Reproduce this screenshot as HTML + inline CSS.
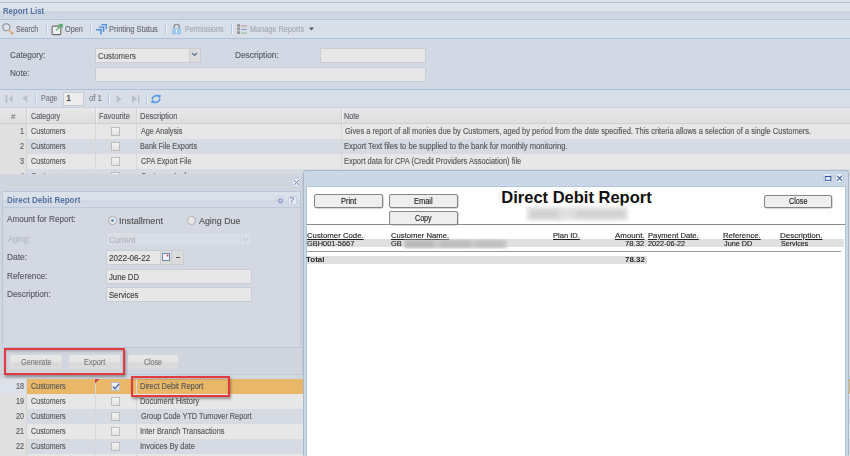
<!DOCTYPE html>
<html><head><meta charset="utf-8">
<style>
*{margin:0;padding:0;box-sizing:border-box}
html,body{width:850px;height:456px;overflow:hidden}
body{position:relative;background:#d6dce6;font-family:"Liberation Sans",sans-serif;color:#444}
.a{position:absolute}
svg.a{overflow:visible}
.t{position:absolute;white-space:nowrap;line-height:1;transform-origin:0 0;-webkit-text-stroke:0.15px}
.k{-webkit-text-stroke:0.12px}
</style></head><body>
<div class="a" style="left:0px;top:0px;width:850px;height:2px;background:#dde2ea"></div>
<div class="a" style="left:0px;top:2px;width:850px;height:1px;background:#b1c3da"></div>
<div class="a" style="left:0px;top:3px;width:850px;height:16px;background:linear-gradient(#dee3eb 0,#dee3eb 47%,#cbd4e1 53%,#d0d8e4 100%)"></div>
<div class="t" style="left:2.79px;top:7px;font-size:8.5px;color:#54739f;font-weight:bold;-webkit-text-stroke:0;transform:scaleX(0.916);">Report List</div>
<div class="a" style="left:0px;top:19px;width:850px;height:1px;background:#b3c4da"></div>
<div class="a" style="left:0px;top:20px;width:850px;height:18px;background:#d9dfe8"></div>
<svg class="a" style="left:0px;top:19px" width="16" height="18" viewBox="0 0 16 18">
  <circle cx="6.36" cy="8.3" r="3.5" fill="#dfe2e8" stroke="#8b909a" stroke-width="1.1"/>
  <line x1="9.2" y1="11.3" x2="12.6" y2="14.6" stroke="#dfb67a" stroke-width="1.9" stroke-linecap="round"/>
  <line x1="12" y1="14" x2="12.8" y2="14.8" stroke="#9a7a50" stroke-width="1.6"/></svg>
<div class="t" style="left:16.48px;top:25px;font-size:8.5px;color:#6c6c76;transform:scaleX(0.824);">Search</div>
<div class="a" style="left:46px;top:23.5px;width:2px;height:10.5px;background:linear-gradient(90deg,#b3c8e2 50%,#eef1f5 50%)"></div>
<svg class="a" style="left:45px;top:19px" width="20" height="18" viewBox="0 0 20 18">
  <rect x="7.1" y="7.1" width="8.7" height="8.5" rx="1" fill="#efefef" stroke="#6a6a6a" stroke-width="1.1"/>
  <line x1="11.2" y1="11.2" x2="16.3" y2="6.1" stroke="#5cb270" stroke-width="1.4"/>
  <path d="M13.2 5 L17.8 4.8 L17.8 9.4Z" fill="#5cb270"/></svg>
<div class="t" style="left:65.47px;top:25px;font-size:8.5px;color:#6c6c76;transform:scaleX(0.857);">Open</div>
<div class="a" style="left:90px;top:23.5px;width:2px;height:10.5px;background:linear-gradient(90deg,#b3c8e2 50%,#eef1f5 50%)"></div>
<svg class="a" style="left:90px;top:19px" width="18" height="18" viewBox="0 0 18 18">
  <path d="M11.4 5.6 H16.3 V10.3" fill="none" stroke="#4f93e2" stroke-width="1.4"/>
  <path d="M9 8.1 H13.6 V12.7" fill="none" stroke="#4a8ede" stroke-width="1.4"/>
  <path d="M6.1 10.7 H11 V15.6" fill="none" stroke="#4a8ede" stroke-width="1.5"/></svg>
<div class="t" style="left:109.20px;top:25px;font-size:8.5px;color:#6c6c76;transform:scaleX(0.884);">Printing Status</div>
<div class="a" style="left:165px;top:23.5px;width:2px;height:10.5px;background:linear-gradient(90deg,#b3c8e2 50%,#eef1f5 50%)"></div>
<svg class="a" style="left:162px;top:19px" width="20" height="18" viewBox="0 0 20 18">
  <path d="M12 9.5 V8 A2.6 2.6 0 0 1 17.3 8 V9.5" fill="none" stroke="#8d8f94" stroke-width="1.4"/>
  <rect x="10.1" y="9.2" width="9" height="6.4" rx="0.8" fill="#9dc9ee"/>
  <path d="M14.6 10.6 a0.8 0.8 0 0 1 0.4 1.4 V14.1 H14.2 V12 a0.8 0.8 0 0 1 0.4 -1.4Z" fill="#f0f6fc"/></svg>
<div class="t" style="left:184.64px;top:25px;font-size:8.5px;color:#a5aab4;transform:scaleX(0.830);">Permissions</div>
<div class="a" style="left:231px;top:23.5px;width:2px;height:10.5px;background:linear-gradient(90deg,#b3c8e2 50%,#eef1f5 50%)"></div>
<svg class="a" style="left:228px;top:19px" width="20" height="18" viewBox="0 0 20 18">
  <rect x="9.6" y="5.6" width="1.9" height="1.8" fill="none" stroke="#8f8f8f" stroke-width="0.9"/>
  <rect x="9.6" y="9.1" width="1.9" height="1.8" fill="none" stroke="#8f8f8f" stroke-width="0.9"/>
  <rect x="9.6" y="12.7" width="1.9" height="1.8" fill="none" stroke="#8f8f8f" stroke-width="0.9"/>
  <rect x="12.9" y="6.2" width="6" height="1.3" fill="#c9a0a2"/>
  <rect x="12.9" y="9.8" width="6" height="1.3" fill="#9ea4d2"/>
  <rect x="12.9" y="13.4" width="6" height="1.3" fill="#9fcaa0"/></svg>
<div class="t" style="left:249.62px;top:25px;font-size:8.5px;color:#a5aab4;transform:scaleX(0.860);">Manage Reports</div>
<svg class="a" style="left:309px;top:27px" width="5" height="4" viewBox="0 0 5 4"><path d="M0 0.5 H5 L2.5 3.5Z" fill="#555"/></svg>
<div class="a" style="left:0px;top:38px;width:850px;height:1px;background:#adc1da"></div>
<div class="a" style="left:0px;top:39px;width:850px;height:50px;background:#d3d9e4"></div>
<div class="t" style="left:10.39px;top:51px;font-size:9px;color:#5a5a66;transform:scaleX(0.906);">Category:</div>
<div class="a" style="left:95px;top:48px;width:106px;height:15px;background:#e7e7e7;border:1px solid #c9ccd2"></div>
<div class="a" style="left:189px;top:49px;width:11px;height:13px;background:#dcdcdc;border-left:1px solid #cfcfcf"></div>
<svg class="a" style="left:191px;top:52px" width="7" height="5" viewBox="0 0 7 5"><path d="M1 1 L3.5 3.5 L6 1" fill="none" stroke="#5b6f92" stroke-width="1.2"/></svg>
<div class="t" style="left:98.11px;top:52px;font-size:8.5px;color:#555;transform:scaleX(0.926);">Customers</div>
<div class="t" style="left:235.04px;top:51px;font-size:9px;color:#5a5a66;transform:scaleX(0.921);">Description:</div>
<div class="a" style="left:320px;top:48px;width:106px;height:15px;background:#e7e7e7;border:1px solid #c9ccd2"></div>
<div class="t" style="left:10.15px;top:69px;font-size:9px;color:#5a5a66;transform:scaleX(0.903);">Note:</div>
<div class="a" style="left:95px;top:67px;width:331px;height:15px;background:#e7e7e7;border:1px solid #c9ccd2"></div>
<div class="a" style="left:0px;top:89px;width:850px;height:1px;background:#adc1da"></div>
<div class="a" style="left:0px;top:90px;width:850px;height:18px;background:#d8dee7"></div>
<svg class="a" style="left:5px;top:94px" width="9" height="10" viewBox="0 0 9 10"><rect x="0.4" y="0.6" width="2" height="8.5" fill="#bcc0c7"/><path d="M7.7 0.6 L3.7 4.8 L7.7 9Z" fill="#bcc0c7"/></svg>
<svg class="a" style="left:22px;top:94px" width="6" height="10" viewBox="0 0 6 10"><path d="M5.3 0.6 L0.3 4.6 L5.3 8.4Z" fill="#bcc0c7"/></svg>
<div class="a" style="left:35px;top:94px;width:2px;height:10px;background:linear-gradient(90deg,#b3c8e2 50%,#eef1f5 50%)"></div>
<div class="t" style="left:41.24px;top:94px;font-size:8.5px;color:#7a7a84;transform:scaleX(0.830);">Page</div>
<div class="a" style="left:63px;top:92px;width:21px;height:14px;background:#ececec;border:1px solid #c9ccd2"></div>
<div class="t" style="left:66.36px;top:94px;font-size:8.5px;color:#333;">1</div>
<div class="t" style="left:89.29px;top:94px;font-size:8.5px;color:#7a7a84;transform:scaleX(0.908);">of 1</div>
<div class="a" style="left:108px;top:94px;width:2px;height:10px;background:linear-gradient(90deg,#b3c8e2 50%,#eef1f5 50%)"></div>
<svg class="a" style="left:116px;top:94px" width="6" height="10" viewBox="0 0 6 10"><path d="M0.5 1 L5.5 5 L0.5 9Z" fill="#b9bec7"/></svg>
<svg class="a" style="left:131px;top:94px" width="9" height="10" viewBox="0 0 9 10"><path d="M1 1 L6 5 L1 9Z" fill="#b9bec7"/><rect x="6.9" y="1" width="1.6" height="8" fill="#b9bec7"/></svg>
<div class="a" style="left:146px;top:94px;width:2px;height:10px;background:linear-gradient(90deg,#b3c8e2 50%,#eef1f5 50%)"></div>
<svg class="a" style="left:150px;top:93px" width="12" height="12" viewBox="0 0 12 12">
 <path d="M2.2 6.2 C2.6 3.2 6 1.8 8.8 3.4" fill="none" stroke="#5b9de2" stroke-width="1.7"/>
 <path d="M7.6 1.4 L11.2 2.6 L9.4 6Z" fill="#5b9de2"/>
 <path d="M9.8 5.8 C9.4 8.8 6 10.2 3.2 8.6" fill="none" stroke="#5b9de2" stroke-width="1.7"/>
 <path d="M4.4 10.6 L0.8 9.4 L2.6 6Z" fill="#5b9de2"/></svg>
<div class="a" style="left:0px;top:107px;width:850px;height:1px;background:#c9d2de"></div>
<div class="a" style="left:0px;top:108px;width:850px;height:16px;background:linear-gradient(#e8e8e8,#dedede);border-bottom:1px solid #d0d0d0"></div>
<div class="a" style="left:26px;top:108px;width:2px;height:15px;background:linear-gradient(90deg,#d2d2d2 50%,#f0f0f0 50%)"></div>
<div class="a" style="left:95px;top:108px;width:2px;height:15px;background:linear-gradient(90deg,#d2d2d2 50%,#f0f0f0 50%)"></div>
<div class="a" style="left:136px;top:108px;width:2px;height:15px;background:linear-gradient(90deg,#d2d2d2 50%,#f0f0f0 50%)"></div>
<div class="a" style="left:341px;top:108px;width:2px;height:15px;background:linear-gradient(90deg,#d2d2d2 50%,#f0f0f0 50%)"></div>
<div class="t" style="left:11.36px;top:113px;font-size:8px;color:#888;transform:scaleX(0.986);">#</div>
<div class="t" style="left:31.34px;top:112px;font-size:8.5px;color:#5c5c66;transform:scaleX(0.845);">Category</div>
<div class="t" style="left:99.11px;top:112px;font-size:8.5px;color:#5c5c66;transform:scaleX(0.868);">Favourite</div>
<div class="t" style="left:140.40px;top:112px;font-size:8.5px;color:#5c5c66;transform:scaleX(0.877);">Description</div>
<div class="t" style="left:344.42px;top:112px;font-size:8.5px;color:#5c5c66;transform:scaleX(0.859);">Note</div>
<div class="a" style="left:0px;top:124px;width:850px;height:15px;background:#e7e7e7"></div>
<div class="a" style="left:0px;top:124px;width:27px;height:15px;background:#e0e0e0;border-right:1px solid #d4d4d4"></div>
<div class="a" style="left:95px;top:124px;width:1px;height:15px;background:#d8d8d8"></div>
<div class="a" style="left:136px;top:124px;width:1px;height:15px;background:#d8d8d8"></div>
<div class="a" style="left:341px;top:124px;width:1px;height:15px;background:#d8d8d8"></div>
<div class="t" style="left:19.93px;top:127px;font-size:8.5px;color:#606060;transform:scaleX(0.847);">1</div>
<div class="t" style="left:31.34px;top:127px;font-size:8.5px;color:#585858;transform:scaleX(0.842);">Customers</div>
<div class="a" style="left:111px;top:127px;width:9px;height:9px;background:linear-gradient(#f4f4f4,#e2e2e2);border:1px solid #bdbdbd"></div>
<div class="t" style="left:141.00px;top:127px;font-size:8.5px;color:#585858;transform:scaleX(0.848);">Age Analysis</div>
<div class="t" style="left:344.63px;top:127px;font-size:8.5px;color:#585858;transform:scaleX(0.882);">Gives a report of all monies due by Customers, aged by period from the date specified. This criteria allows a selection of a single Customers.</div>
<div class="a" style="left:0px;top:139px;width:850px;height:15px;background:#d5dae3"></div>
<div class="a" style="left:0px;top:139px;width:27px;height:15px;background:#e0e0e0;border-right:1px solid #d4d4d4"></div>
<div class="a" style="left:95px;top:139px;width:1px;height:15px;background:#d8d8d8"></div>
<div class="a" style="left:136px;top:139px;width:1px;height:15px;background:#d8d8d8"></div>
<div class="a" style="left:341px;top:139px;width:1px;height:15px;background:#d8d8d8"></div>
<div class="t" style="left:19.96px;top:142px;font-size:8.5px;color:#606060;transform:scaleX(0.847);">2</div>
<div class="t" style="left:31.34px;top:142px;font-size:8.5px;color:#585858;transform:scaleX(0.842);">Customers</div>
<div class="a" style="left:111px;top:142px;width:9px;height:9px;background:linear-gradient(#f4f4f4,#e2e2e2);border:1px solid #bdbdbd"></div>
<div class="t" style="left:140.42px;top:142px;font-size:8.5px;color:#585858;transform:scaleX(0.856);">Bank File Exports</div>
<div class="t" style="left:344.39px;top:142px;font-size:8.5px;color:#585858;transform:scaleX(0.900);">Export Text files to be supplied to the bank for monthly monitoring.</div>
<div class="a" style="left:0px;top:154px;width:850px;height:15px;background:#e7e7e7"></div>
<div class="a" style="left:0px;top:154px;width:27px;height:15px;background:#e0e0e0;border-right:1px solid #d4d4d4"></div>
<div class="a" style="left:95px;top:154px;width:1px;height:15px;background:#d8d8d8"></div>
<div class="a" style="left:136px;top:154px;width:1px;height:15px;background:#d8d8d8"></div>
<div class="a" style="left:341px;top:154px;width:1px;height:15px;background:#d8d8d8"></div>
<div class="t" style="left:19.89px;top:157px;font-size:8.5px;color:#606060;transform:scaleX(0.847);">3</div>
<div class="t" style="left:31.34px;top:157px;font-size:8.5px;color:#585858;transform:scaleX(0.842);">Customers</div>
<div class="a" style="left:111px;top:157px;width:9px;height:9px;background:linear-gradient(#f4f4f4,#e2e2e2);border:1px solid #bdbdbd"></div>
<div class="t" style="left:140.64px;top:157px;font-size:8.5px;color:#585858;transform:scaleX(0.850);">CPA Export File</div>
<div class="t" style="left:344.40px;top:157px;font-size:8.5px;color:#585858;transform:scaleX(0.877);">Export data for CPA (Credit Providers Association) file</div>
<div class="a" style="left:0px;top:169px;width:850px;height:15px;background:#d5dae3"></div>
<div class="a" style="left:0px;top:169px;width:27px;height:15px;background:#e0e0e0;border-right:1px solid #d4d4d4"></div>
<div class="a" style="left:95px;top:169px;width:1px;height:15px;background:#d8d8d8"></div>
<div class="a" style="left:136px;top:169px;width:1px;height:15px;background:#d8d8d8"></div>
<div class="a" style="left:341px;top:169px;width:1px;height:15px;background:#d8d8d8"></div>
<div class="t" style="left:19.82px;top:172px;font-size:8.5px;color:#606060;transform:scaleX(0.847);">4</div>
<div class="t" style="left:31.34px;top:172px;font-size:8.5px;color:#585858;transform:scaleX(0.842);">Customers</div>
<div class="a" style="left:111px;top:172px;width:9px;height:9px;background:linear-gradient(#f4f4f4,#e2e2e2);border:1px solid #bdbdbd"></div>
<div class="t" style="left:140.64px;top:172px;font-size:8.5px;color:#585858;transform:scaleX(0.845);">Customer Ledger</div>
<div class="a" style="left:0px;top:379px;width:850px;height:15px;background:#e8b868"></div>
<div class="a" style="left:0px;top:379px;width:27px;height:15px;background:#dde2ea;border-right:1px solid #d4d4d4"></div>
<div class="a" style="left:95px;top:379px;width:1px;height:15px;background:#d8d8d8"></div>
<div class="a" style="left:136px;top:379px;width:1px;height:15px;background:#d8d8d8"></div>
<div class="a" style="left:341px;top:379px;width:1px;height:15px;background:#d8d8d8"></div>
<div class="t" style="left:15.90px;top:382px;font-size:8.5px;color:#606060;transform:scaleX(0.847);">18</div>
<div class="t" style="left:31.34px;top:382px;font-size:8.5px;color:#585858;transform:scaleX(0.842);">Customers</div>
<div class="a" style="left:111px;top:382px;width:9px;height:9px;background:linear-gradient(#f4f4f4,#e2e2e2);border:1px solid #bdbdbd"></div>
<svg class="a" style="left:95px;top:379px" width="5" height="5" viewBox="0 0 5 5"><path d="M0 0 H4.5 L0 4.5Z" fill="#d04050"/></svg>
<svg class="a" style="left:112px;top:383px" width="8" height="7" viewBox="0 0 8 7"><path d="M1 3.5 L3 5.8 L7 0.8" fill="none" stroke="#3a5a9a" stroke-width="1.2"/></svg>
<div class="t" style="left:140.40px;top:382px;font-size:8.5px;color:#585858;transform:scaleX(0.877);">Direct Debit Report</div>
<div class="a" style="left:0px;top:394px;width:850px;height:15px;background:#e7e7e7"></div>
<div class="a" style="left:0px;top:394px;width:27px;height:15px;background:#e0e0e0;border-right:1px solid #d4d4d4"></div>
<div class="a" style="left:95px;top:394px;width:1px;height:15px;background:#d8d8d8"></div>
<div class="a" style="left:136px;top:394px;width:1px;height:15px;background:#d8d8d8"></div>
<div class="a" style="left:341px;top:394px;width:1px;height:15px;background:#d8d8d8"></div>
<div class="t" style="left:15.93px;top:397px;font-size:8.5px;color:#606060;transform:scaleX(0.847);">19</div>
<div class="t" style="left:31.34px;top:397px;font-size:8.5px;color:#585858;transform:scaleX(0.842);">Customers</div>
<div class="a" style="left:111px;top:397px;width:9px;height:9px;background:linear-gradient(#f4f4f4,#e2e2e2);border:1px solid #bdbdbd"></div>
<div class="t" style="left:140.40px;top:397px;font-size:8.5px;color:#585858;transform:scaleX(0.875);">Document History</div>
<div class="a" style="left:0px;top:409px;width:850px;height:15px;background:#d5dae3"></div>
<div class="a" style="left:0px;top:409px;width:27px;height:15px;background:#e0e0e0;border-right:1px solid #d4d4d4"></div>
<div class="a" style="left:95px;top:409px;width:1px;height:15px;background:#d8d8d8"></div>
<div class="a" style="left:136px;top:409px;width:1px;height:15px;background:#d8d8d8"></div>
<div class="a" style="left:341px;top:409px;width:1px;height:15px;background:#d8d8d8"></div>
<div class="t" style="left:15.86px;top:412px;font-size:8.5px;color:#606060;transform:scaleX(0.847);">20</div>
<div class="t" style="left:31.34px;top:412px;font-size:8.5px;color:#585858;transform:scaleX(0.842);">Customers</div>
<div class="a" style="left:111px;top:412px;width:9px;height:9px;background:linear-gradient(#f4f4f4,#e2e2e2);border:1px solid #bdbdbd"></div>
<div class="t" style="left:140.64px;top:412px;font-size:8.5px;color:#585858;transform:scaleX(0.856);">Group Code YTD Turnover Report</div>
<div class="a" style="left:0px;top:424px;width:850px;height:15px;background:#e7e7e7"></div>
<div class="a" style="left:0px;top:424px;width:27px;height:15px;background:#e0e0e0;border-right:1px solid #d4d4d4"></div>
<div class="a" style="left:95px;top:424px;width:1px;height:15px;background:#d8d8d8"></div>
<div class="a" style="left:136px;top:424px;width:1px;height:15px;background:#d8d8d8"></div>
<div class="a" style="left:341px;top:424px;width:1px;height:15px;background:#d8d8d8"></div>
<div class="t" style="left:15.93px;top:427px;font-size:8.5px;color:#606060;transform:scaleX(0.847);">21</div>
<div class="t" style="left:31.34px;top:427px;font-size:8.5px;color:#585858;transform:scaleX(0.842);">Customers</div>
<div class="a" style="left:111px;top:427px;width:9px;height:9px;background:linear-gradient(#f4f4f4,#e2e2e2);border:1px solid #bdbdbd"></div>
<div class="t" style="left:140.33px;top:427px;font-size:8.5px;color:#585858;transform:scaleX(0.873);">Inter Branch Transactions</div>
<div class="a" style="left:0px;top:439px;width:850px;height:15px;background:#d5dae3"></div>
<div class="a" style="left:0px;top:439px;width:27px;height:15px;background:#e0e0e0;border-right:1px solid #d4d4d4"></div>
<div class="a" style="left:95px;top:439px;width:1px;height:15px;background:#d8d8d8"></div>
<div class="a" style="left:136px;top:439px;width:1px;height:15px;background:#d8d8d8"></div>
<div class="a" style="left:341px;top:439px;width:1px;height:15px;background:#d8d8d8"></div>
<div class="t" style="left:15.97px;top:442px;font-size:8.5px;color:#606060;transform:scaleX(0.847);">22</div>
<div class="t" style="left:31.34px;top:442px;font-size:8.5px;color:#585858;transform:scaleX(0.842);">Customers</div>
<div class="a" style="left:111px;top:442px;width:9px;height:9px;background:linear-gradient(#f4f4f4,#e2e2e2);border:1px solid #bdbdbd"></div>
<div class="t" style="left:140.33px;top:442px;font-size:8.5px;color:#585858;transform:scaleX(0.879);">Invoices By date</div>
<div class="a" style="left:0px;top:454px;width:850px;height:15px;background:#e7e7e7"></div>
<div class="a" style="left:0px;top:454px;width:27px;height:15px;background:#e0e0e0;border-right:1px solid #d4d4d4"></div>
<div class="a" style="left:95px;top:454px;width:1px;height:15px;background:#d8d8d8"></div>
<div class="a" style="left:136px;top:454px;width:1px;height:15px;background:#d8d8d8"></div>
<div class="a" style="left:341px;top:454px;width:1px;height:15px;background:#d8d8d8"></div>
<div class="t" style="left:15.90px;top:457px;font-size:8.5px;color:#606060;transform:scaleX(0.847);">23</div>
<div class="t" style="left:31.34px;top:457px;font-size:8.5px;color:#585858;transform:scaleX(0.842);">Customers</div>
<div class="a" style="left:111px;top:457px;width:9px;height:9px;background:linear-gradient(#f4f4f4,#e2e2e2);border:1px solid #bdbdbd"></div>
<div class="t" style="left:140.29px;top:457px;font-size:8.5px;color:#585858;transform:scaleX(0.927);">Invoices Report</div>
<div class="a" style="left:0px;top:174px;width:303px;height:205px;background:linear-gradient(#d0d5de 0,#d0d5de 97.5%,#c8ced8 97.5%);border-right:1px solid #c3c9d2"></div>
<div class="a" style="left:0px;top:374px;width:303px;height:1px;background:#bccadc"></div>
<div class="a" style="left:0px;top:375px;width:303px;height:3.5px;background:#d2d7df"></div>
<div class="a" style="left:291.7px;top:177.5px;width:8.8px;height:9.2px;background:#e8ecf2;border:1px solid #c8d3e2;border-radius:2px"></div>
<svg class="a" style="left:293px;top:179px" width="7" height="7" viewBox="0 0 7 7"><path d="M1 1 L6 6 M6 1 L1 6" stroke="#7483ad" stroke-width="1"/></svg>
<div class="a" style="left:2px;top:191px;width:299px;height:157px;border:1px solid #b8c7da;background:#d3d8e3"></div>
<div class="a" style="left:3px;top:192px;width:297px;height:16px;background:linear-gradient(#dbe1ea 0,#dbe1ea 50%,#d1d8e3 55%,#d4dbe6 100%);border-bottom:1px solid #bccadc"></div>
<div class="t" style="left:6.58px;top:196px;font-size:8.5px;color:#54739f;font-weight:bold;-webkit-text-stroke:0;transform:scaleX(0.947);">Direct Debit Report</div>
<div class="a" style="left:276px;top:195.5px;width:9px;height:9.5px;background:#e8ecf2;border:1px solid #c8d3e2;border-radius:2px"></div>
<svg class="a" style="left:277px;top:197px" width="7" height="7" viewBox="0 0 7 7"><circle cx="3.5" cy="3.8" r="2.9" fill="#9ea3cc"/><circle cx="3.5" cy="3.8" r="1.2" fill="#c8cce6"/></svg>
<div class="a" style="left:287.5px;top:195.5px;width:9px;height:9.5px;background:#e8ecf2;border:1px solid #c8d3e2;border-radius:2px"></div>
<div class="t" style="left:289.18px;top:196px;font-size:9px;color:#8799b6;font-weight:bold;-webkit-text-stroke:0;transform:scaleX(1.046);">?</div>
<div class="t" style="left:7.10px;top:215px;font-size:9px;color:#5a5a66;transform:scaleX(0.904);">Amount for Report:</div>
<div class="a" style="left:108px;top:216px;width:8.5px;height:8.5px;border-radius:50%;background:#ececec;border:1px solid #a8a8a8"></div>
<div class="a" style="left:110.5px;top:218.5px;width:3.5px;height:3.5px;border-radius:50%;background:#5b8fc0"></div>
<div class="t" style="left:119.38px;top:216px;font-size:9.5px;color:#555;transform:scaleX(0.957);">Installment</div>
<div class="a" style="left:187.2px;top:216px;width:8.5px;height:8.5px;border-radius:50%;background:#e8e8e8;border:1px solid #b0b0b0"></div>
<div class="t" style="left:199.40px;top:216px;font-size:9.5px;color:#555;transform:scaleX(0.933);">Aging Due</div>
<div class="t" style="left:7.50px;top:235px;font-size:9px;color:#b4b8c2;transform:scaleX(0.870);">Aging:</div>
<div class="a" style="left:106px;top:232px;width:146px;height:14px;background:#d9dde5;border:1px solid #d3d7df"></div>
<div class="a" style="left:240px;top:233px;width:11px;height:12px;border-left:1px solid #d3d7df"></div>
<div class="t" style="left:108.50px;top:236px;font-size:8.5px;color:#b0b4bc;transform:scaleX(0.930);">Current</div>
<svg class="a" style="left:242px;top:237px" width="7" height="5" viewBox="0 0 7 5"><path d="M1 1 L3.5 3.5 L6 1" fill="none" stroke="#b8bdc8" stroke-width="1"/></svg>
<div class="t" style="left:6.83px;top:253px;font-size:9px;color:#5a5a66;transform:scaleX(0.933);">Date:</div>
<div class="a" style="left:106px;top:250px;width:55px;height:15px;background:#e7e7e7;border:1px solid #c9ccd2"></div>
<div class="t" style="left:108.50px;top:254px;font-size:8.5px;color:#444;transform:scaleX(0.948);">2022-06-22</div>
<div class="a" style="left:160px;top:250px;width:12px;height:15px;background:#dcdcdc;border:1px solid #c9ccd2"></div>
<svg class="a" style="left:162px;top:253px" width="8" height="8" viewBox="0 0 8 8"><rect x="0.5" y="0.5" width="7" height="7" fill="#eef2f8" stroke="#6f86aa" stroke-width="1"/><circle cx="5.5" cy="2.6" r="1" fill="#d24a4a"/></svg>
<div class="a" style="left:172px;top:250px;width:12px;height:15px;background:#dcdcdc;border:1px solid #c9ccd2;border-left:none"></div>
<div class="a" style="left:175.5px;top:257px;width:4px;height:1.2px;background:#555"></div>
<div class="t" style="left:6.84px;top:272px;font-size:9px;color:#5a5a66;transform:scaleX(0.918);">Reference:</div>
<div class="a" style="left:106px;top:269px;width:146px;height:15px;background:#e7e7e7;border:1px solid #c9ccd2"></div>
<div class="t" style="left:108.78px;top:273px;font-size:8.5px;color:#444;transform:scaleX(0.906);">June DD</div>
<div class="t" style="left:6.84px;top:290px;font-size:9px;color:#5a5a66;transform:scaleX(0.921);">Description:</div>
<div class="a" style="left:106px;top:287px;width:146px;height:15px;background:#e7e7e7;border:1px solid #c9ccd2"></div>
<div class="t" style="left:108.55px;top:291px;font-size:8.5px;color:#444;transform:scaleX(0.902);">Services</div>
<div class="a" style="left:10px;top:355px;width:52px;height:14px;background:linear-gradient(#e8e8e8 0,#e4e4e4 50%,#d9d9d9 55%,#dcdcdc 100%);border-radius:2px"></div>
<div class="a" style="left:69px;top:355px;width:51px;height:14px;background:linear-gradient(#e8e8e8 0,#e4e4e4 50%,#d9d9d9 55%,#dcdcdc 100%);border-radius:2px"></div>
<div class="a" style="left:128px;top:355px;width:50px;height:14px;background:linear-gradient(#e8e8e8 0,#e4e4e4 50%,#d9d9d9 55%,#dcdcdc 100%);border-radius:2px"></div>
<div class="t" style="left:20.63px;top:358px;font-size:8.5px;color:#7c7c7c;transform:scaleX(0.860);">Generate</div>
<div class="t" style="left:83.51px;top:358px;font-size:8.5px;color:#7c7c7c;transform:scaleX(0.870);">Export</div>
<div class="t" style="left:143.85px;top:358px;font-size:8.5px;color:#7c7c7c;transform:scaleX(0.823);">Close</div>
<div class="a" style="left:4px;top:348px;width:121px;height:27px;border:2px solid #e4393f;box-shadow:1px 1.5px 2.5px rgba(0,0,0,.35), inset 0 1.5px 2px rgba(0,0,0,.18)"></div>
<div class="a" style="left:131px;top:375.5px;width:99px;height:21.5px;border:2px solid #e4393f;box-shadow:1px 1.5px 2.5px rgba(0,0,0,.35), inset 0 1.5px 2px rgba(0,0,0,.18)"></div>
<div class="a" style="left:303px;top:170px;width:546px;height:290px;background:#cbd7e6;border:1px solid #a9b9cc;border-radius:3px 3px 0 0"></div>
<div class="a" style="left:822.7px;top:173.3px;width:9.5px;height:10px;background:#f2f6fb;border:1px solid #b9cce4;border-radius:2.5px"></div>
<svg class="a" style="left:824px;top:175px" width="8" height="7" viewBox="0 0 8 7"><rect x="1.2" y="1.3" width="5.6" height="4.3" fill="#dce8f6" stroke="#3050a8" stroke-width="0.9"/><rect x="1.2" y="1" width="5.6" height="1" fill="#3050a8"/></svg>
<div class="a" style="left:834.8px;top:173.3px;width:9.3px;height:10px;background:#f2f6fb;border:1px solid #b9cce4;border-radius:2.5px"></div>
<svg class="a" style="left:836px;top:175px" width="7" height="7" viewBox="0 0 7 7"><path d="M0.9 0.7 L6.1 5.9 M6.1 0.7 L0.9 5.9" stroke="#3a5aa8" stroke-width="1.1"/></svg>
<div class="a" style="left:306px;top:186px;width:540px;height:280px;background:#fff;border:1px solid #b3c6de"></div>
<div class="a" style="left:314px;top:194px;width:69px;height:13.5px;background:#eeeeee;border:1px solid #858585;border-radius:2px;box-shadow:0.5px 0.5px 0.5px rgba(0,0,0,.3)"></div>
<div class="a" style="left:389px;top:194px;width:69px;height:13.5px;background:#eeeeee;border:1px solid #858585;border-radius:2px;box-shadow:0.5px 0.5px 0.5px rgba(0,0,0,.3)"></div>
<div class="a" style="left:389px;top:211px;width:69px;height:13.5px;background:#eeeeee;border:1px solid #858585;border-radius:2px;box-shadow:0.5px 0.5px 0.5px rgba(0,0,0,.3)"></div>
<div class="a" style="left:764px;top:194.5px;width:68px;height:13.5px;background:#eeeeee;border:1px solid #858585;border-radius:2px;box-shadow:0.5px 0.5px 0.5px rgba(0,0,0,.3)"></div>
<div class="t" style="left:340.61px;top:197px;font-size:9px;color:#222;transform:scaleX(0.823);">Print</div>
<div class="t" style="left:414.00px;top:197px;font-size:9px;color:#222;transform:scaleX(0.830);">Email</div>
<div class="t" style="left:414.84px;top:214px;font-size:9px;color:#222;transform:scaleX(0.793);">Copy</div>
<div class="t" style="left:789.04px;top:197px;font-size:9px;color:#222;transform:scaleX(0.799);">Close</div>
<div class="t" style="left:501.33px;top:189px;font-size:16.5px;color:#111;font-weight:bold;-webkit-text-stroke:0;">Direct Debit Report</div>
<div class="a" style="left:526px;top:206px;width:102px;height:15px;background:#f1f1f1;filter:blur(1.5px)"></div>
<div class="a" style="left:529px;top:208.5px;width:32px;height:10px;background:#d0d0d0;filter:blur(2.2px)"></div>
<div class="a" style="left:558px;top:209px;width:18px;height:9px;background:#dedede;filter:blur(2.2px)"></div>
<div class="a" style="left:575px;top:208.5px;width:51px;height:10px;background:#d2d2d2;filter:blur(2.2px)"></div>
<div class="a" style="left:307px;top:224px;width:538px;height:1px;background:#8a8a8a"></div>
<div class="a" style="left:307px;top:239px;width:537px;height:8px;background:#e0e0e0"></div>
<div class="t k" style="left:307.41px;top:232px;font-size:7.5px;color:#222;transform:scaleX(1.038);text-decoration:underline;">Customer Code.</div>
<div class="t k" style="left:391.42px;top:232px;font-size:7.5px;color:#222;transform:scaleX(1.025);text-decoration:underline;">Customer Name.</div>
<div class="t k" style="left:552.59px;top:232px;font-size:7.5px;color:#222;transform:scaleX(1.008);text-decoration:underline;">Plan ID.</div>
<div class="t k" style="left:615.00px;top:232px;font-size:7.5px;color:#222;transform:scaleX(1.058);text-decoration:underline;">Amount.</div>
<div class="t k" style="left:647.79px;top:232px;font-size:7.5px;color:#222;transform:scaleX(1.023);text-decoration:underline;">Payment Date.</div>
<div class="t k" style="left:723.08px;top:232px;font-size:7.5px;color:#222;transform:scaleX(1.028);text-decoration:underline;">Reference.</div>
<div class="t k" style="left:780.36px;top:232px;font-size:7.5px;color:#222;transform:scaleX(1.073);text-decoration:underline;">Description.</div>
<div class="t k" style="left:307.43px;top:240px;font-size:7.5px;color:#222;transform:scaleX(0.987);">GBH001-5667</div>
<div class="t k" style="left:391.43px;top:240px;font-size:7.5px;color:#222;transform:scaleX(0.991);">GB</div>
<div class="a" style="left:404px;top:240px;width:103px;height:7.5px;background:#c9c9c9;filter:blur(1px)"></div>
<div class="a" style="left:406px;top:241px;width:28px;height:5.5px;background:#b8b8b8;filter:blur(1.5px)"></div>
<div class="a" style="left:440px;top:241px;width:30px;height:5.5px;background:#bdbdbd;filter:blur(1.5px)"></div>
<div class="a" style="left:476px;top:241px;width:26px;height:5.5px;background:#c2c2c2;filter:blur(1.5px)"></div>
<div class="t k" style="left:625.21px;top:240px;font-size:7.5px;color:#222;transform:scaleX(1.028);">78.32</div>
<div class="t k" style="left:648.04px;top:240px;font-size:7.5px;color:#222;transform:scaleX(0.968);">2022-06-22</div>
<div class="t k" style="left:723.59px;top:240px;font-size:7.5px;color:#222;transform:scaleX(0.968);">June DD</div>
<div class="t k" style="left:780.68px;top:240px;font-size:7.5px;color:#222;transform:scaleX(0.952);">Services</div>
<div class="a" style="left:307px;top:251px;width:534px;height:1px;background:#9a9a9a"></div>
<div class="a" style="left:307px;top:256px;width:340px;height:8px;background:#e0e0e0"></div>
<div class="t k" style="left:305.93px;top:256px;font-size:7.5px;color:#222;font-weight:bold;-webkit-text-stroke:0;transform:scaleX(1.061);">Total</div>
<div class="t k" style="left:624.65px;top:256px;font-size:7.5px;color:#222;font-weight:bold;-webkit-text-stroke:0;transform:scaleX(1.054);">78.32</div>
</body></html>
